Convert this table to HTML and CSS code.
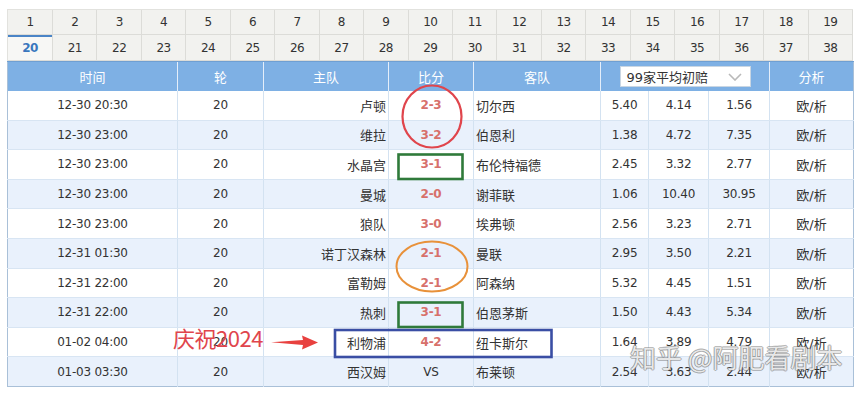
FILE: index.html
```html
<!DOCTYPE html>
<html lang="zh">
<head>
<meta charset="utf-8">
<title>赛程</title>
<link rel="stylesheet" href="styles.css">
</head>
<body>
<div class="page">
  <div class="tabs">
    <div class="tab">1</div><div class="tab">2</div><div class="tab">3</div><div class="tab">4</div><div class="tab">5</div><div class="tab">6</div><div class="tab">7</div><div class="tab">8</div><div class="tab">9</div><div class="tab">10</div><div class="tab">11</div><div class="tab">12</div><div class="tab">13</div><div class="tab">14</div><div class="tab">15</div><div class="tab">16</div><div class="tab">17</div><div class="tab">18</div><div class="tab">19</div>
    <div class="tab on">20</div><div class="tab">21</div><div class="tab">22</div><div class="tab">23</div><div class="tab">24</div><div class="tab">25</div><div class="tab">26</div><div class="tab">27</div><div class="tab">28</div><div class="tab">29</div><div class="tab">30</div><div class="tab">31</div><div class="tab">32</div><div class="tab">33</div><div class="tab">34</div><div class="tab">35</div><div class="tab">36</div><div class="tab">37</div><div class="tab">38</div>
  </div>
  <table class="sched">
    <colgroup>
      <col class="c-time"><col class="c-rnd"><col class="c-home"><col class="c-sc"><col class="c-away"><col class="c-o1"><col class="c-o2"><col class="c-o3"><col class="c-ana">
    </colgroup>
    <thead>
      <tr><th>时间</th><th>轮</th><th>主队</th><th>比分</th><th>客队</th><th colspan="3"><div class="sel"><span>99家平均初赔</span><svg class="chev" width="14" height="8" viewBox="0 0 14 8"><path d="M1 1 L7 7 L13 1" fill="none" stroke="#b9b9b9" stroke-width="1.6"/></svg></div></th><th>分析</th></tr>
    </thead>
    <tbody>
      <tr><td>12-30 20:30</td><td>20</td><td class="home">卢顿</td><td class="sc">2-3</td><td class="away">切尔西</td><td>5.40</td><td>4.14</td><td>1.56</td><td class="ana">欧/析</td></tr>
      <tr><td>12-30 23:00</td><td>20</td><td class="home">维拉</td><td class="sc">3-2</td><td class="away">伯恩利</td><td>1.38</td><td>4.72</td><td>7.35</td><td class="ana">欧/析</td></tr>
      <tr><td>12-30 23:00</td><td>20</td><td class="home">水晶宫</td><td class="sc">3-1</td><td class="away">布伦特福德</td><td>2.45</td><td>3.32</td><td>2.77</td><td class="ana">欧/析</td></tr>
      <tr><td>12-30 23:00</td><td>20</td><td class="home">曼城</td><td class="sc">2-0</td><td class="away">谢菲联</td><td>1.06</td><td>10.40</td><td>30.95</td><td class="ana">欧/析</td></tr>
      <tr><td>12-30 23:00</td><td>20</td><td class="home">狼队</td><td class="sc">3-0</td><td class="away">埃弗顿</td><td>2.56</td><td>3.23</td><td>2.71</td><td class="ana">欧/析</td></tr>
      <tr><td>12-31 01:30</td><td>20</td><td class="home">诺丁汉森林</td><td class="sc">2-1</td><td class="away">曼联</td><td>2.95</td><td>3.50</td><td>2.21</td><td class="ana">欧/析</td></tr>
      <tr><td>12-31 22:00</td><td>20</td><td class="home">富勒姆</td><td class="sc">2-1</td><td class="away">阿森纳</td><td>5.32</td><td>4.45</td><td>1.51</td><td class="ana">欧/析</td></tr>
      <tr><td>12-31 22:00</td><td>20</td><td class="home">热刺</td><td class="sc">3-1</td><td class="away">伯恩茅斯</td><td>1.50</td><td>4.43</td><td>5.34</td><td class="ana">欧/析</td></tr>
      <tr><td>01-02 04:00</td><td>20</td><td class="home">利物浦</td><td class="sc">4-2</td><td class="away">纽卡斯尔</td><td>1.64</td><td>3.89</td><td>4.79</td><td class="ana">欧/析</td></tr>
      <tr><td>01-03 03:30</td><td>20</td><td class="home">西汉姆</td><td class="vs">VS</td><td class="away">布莱顿</td><td>2.54</td><td>3.63</td><td>2.44</td><td class="ana">欧/析</td></tr>
    </tbody>
  </table>
  <svg class="marks" width="862" height="394" viewBox="0 0 862 394">
    <ellipse cx="432" cy="116.5" rx="29.5" ry="31" fill="none" stroke="#e0454c" stroke-width="2.2"/>
    <rect x="398.5" y="154.5" width="64" height="24.5" fill="none" stroke="#2f7a3a" stroke-width="2.6"/>
    <ellipse cx="432" cy="266.5" rx="35.5" ry="25" fill="none" stroke="#e8913a" stroke-width="2"/>
    <rect x="398.5" y="302.5" width="64" height="24.5" fill="none" stroke="#2f7a3a" stroke-width="2.6"/>
    <rect x="335" y="330" width="216.5" height="27" fill="none" stroke="#3a4ea4" stroke-width="2.6"/>
    <polygon points="271,342.2 303,340 302,335.5 318,342.5 302,349.5 303,345" fill="#e8413f"/>
  </svg>
  <div class="note">庆祝2024</div>
  <div class="wm">知乎 @阿肥看剧本</div>
</div>
</body>
</html>
```
FILE: styles.css
```css
html, body {
  margin: 0;
  background: #fff;
}
body {
  font-family: "DejaVu Sans", "Noto Sans CJK SC", sans-serif;
  color: #333;
}
.page {
  position: relative;
  width: 846px;
  padding: 9px 9px 0 7px;
}
.tabs {
  display: grid;
  grid-template-columns: 45px repeat(18, 1fr);
  grid-template-rows: 25px 26px;
  border-top: 1px solid #e2e2de;
  border-left: 1px solid #e2e2de;
  background: #f2f2ef;
}
.tab {
  display: flex;
  align-items: center;
  justify-content: center;
  border-right: 1px solid #dcdcd8;
  border-bottom: 1px solid #dcdcd8;
  font-size: 12px;
  letter-spacing: -0.6px;
  color: #333;
}
.tab.on {
  color: #3a77be;
  font-weight: bold;
  background: #f7f7f5;
  box-shadow: inset 0 2px 0 #4a84c6;
}
.sched {
  width: 846px;
  border-collapse: collapse;
  table-layout: fixed;
  border: 1px solid #a9c0d8;
}
.c-time { width: 170px; }
.c-rnd { width: 86px; }
.c-home { width: 125px; }
.c-sc { width: 85px; }
.c-away { width: 127px; }
.c-o1 { width: 48px; }
.c-o2 { width: 60px; }
.c-o3 { width: 61px; }
.c-ana { width: 84px; }
.sched th {
  height: 29px;
  padding: 0;
  background: #7eb0e4;
  color: #fff;
  font-weight: normal;
  font-size: 13px;
  border-left: 1px solid #e4eefa;
  border-top: 1px solid #6f9fd2;
}
.sched th:first-child { border-left: none; }
.sel {
  width: 123px;
  height: 19px;
  margin: 0 auto;
  background: #fff;
  border: 1px solid #c9d6e3;
  display: flex;
  align-items: center;
  justify-content: space-between;
  padding-left: 6px;
  color: #333;
  font-size: 13px;
  box-sizing: content-box;
}
.chev { margin-right: 8px; }
.sched td {
  height: 28.6px;
  padding: 0;
  text-align: center;
  font-size: 12px;
  letter-spacing: -0.25px;
  border-bottom: 1px solid #d8e5f3;
  border-left: 1px solid #d3e2f1;
  background: #fff;
  white-space: nowrap;
}
.sched td:first-child { border-left: none; }
.sched tbody tr:nth-child(even) td { background: #e9f1fc; }
.sched tbody tr:last-child td { border-bottom: none; }
.sched td.home {
  text-align: right;
  padding-right: 2px;
  font-size: 13px;
  letter-spacing: 0;
}
.sched td.away {
  text-align: left;
  padding-left: 2px;
  font-size: 13px;
  letter-spacing: 0;
}
.sched td.ana {
  font-size: 13px;
  letter-spacing: 0;
}
.sched td.sc {
  color: #d7706b;
  font-weight: bold;
}
.sched td.vs {
  color: #333;
}
.marks {
  position: absolute;
  left: 0;
  top: 0;
  pointer-events: none;
}
.note {
  position: absolute;
  left: 173px;
  top: 325px;
  font-family: "Noto Sans CJK SC", sans-serif;
  font-size: 22px;
  line-height: 24px;
  color: #e0454c;
  letter-spacing: -0.5px;
}
.wm {
  position: absolute;
  left: 630px;
  top: 342px;
  font-family: "Noto Sans CJK SC", sans-serif;
  font-size: 26px;
  line-height: 30px;
  color: rgba(255, 255, 255, 0.85);
  text-shadow: 0 0 1px rgba(90, 90, 90, 0.7), 1px 0 0 rgba(120, 120, 120, 0.45), -1px 0 0 rgba(120, 120, 120, 0.45), 0 1px 0 rgba(120, 120, 120, 0.45), 0 -1px 0 rgba(120, 120, 120, 0.45);
  white-space: nowrap;
}
```
